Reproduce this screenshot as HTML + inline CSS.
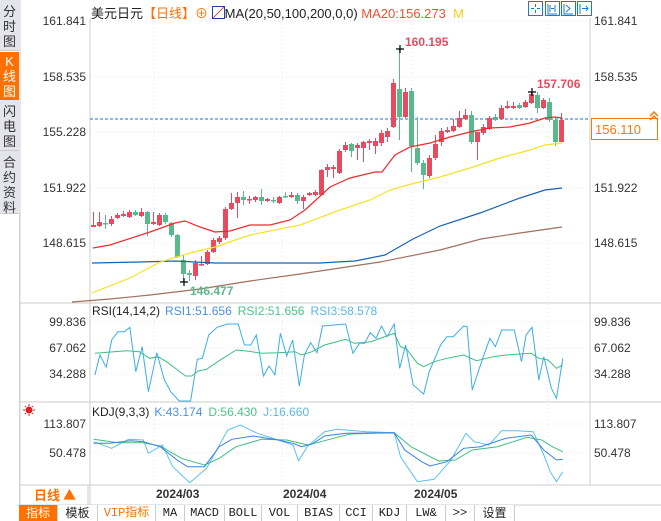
<!DOCTYPE html>
<html><head><meta charset="utf-8"><style>
body{margin:0;width:661px;height:521px;overflow:hidden;background:#fff;font-family:"Liberation Sans","Noto Sans CJK SC",sans-serif;position:relative}
.sb{position:absolute;left:0;width:19px;background:#e4e5ec;color:#333;font-size:13px;line-height:15px;text-align:center;border-bottom:1px solid #ccc}
.t{position:absolute;font-size:12px;white-space:nowrap}
.tb{position:absolute;top:505px;height:16px;border-right:1px solid #ccc;font-family:"Liberation Mono","Noto Sans CJK SC",monospace;font-size:12px;line-height:16px;text-align:center;background:#fff;color:#222}
</style></head><body>
<div class="sb" style="top:0;padding-top:4px;height:46px">分<br>时<br>图</div>
<div class="sb" style="top:52px;height:46px;padding-top:2px;background:#ff7000;color:#fff">K<br>线<br>图</div>
<div class="sb" style="top:100px;height:46px;padding-top:4px">闪<br>电<br>图</div>
<div class="sb" style="top:151px;height:58px;padding-top:4px">合<br>约<br>资<br>料</div>
<div style="position:absolute;left:0;top:213px;width:19px;height:292px;border-right:1px solid #ddd"></div>

<svg width="661" height="521" style="position:absolute;left:0;top:0" id="s" font-family="Liberation Sans, sans-serif">
<g stroke="#e6e6e6" stroke-dasharray="1,3">
<line x1="90" x2="590" y1="21" y2="21"/><line x1="90" x2="590" y1="77" y2="77"/><line x1="90" x2="590" y1="132" y2="132"/><line x1="90" x2="590" y1="188" y2="188"/><line x1="90" x2="590" y1="243" y2="243"/>
<line x1="90" x2="590" y1="322" y2="322"/><line x1="90" x2="590" y1="348" y2="348"/><line x1="90" x2="590" y1="374" y2="374"/>
<line x1="90" x2="590" y1="424" y2="424"/><line x1="90" x2="590" y1="453" y2="453"/>
<line x1="154" x2="154" y1="20" y2="485"/><line x1="282" x2="282" y1="20" y2="485"/><line x1="412" x2="412" y1="20" y2="485"/><line x1="548" x2="548" y1="20" y2="485"/>
</g>
<g stroke="#ccc"><line x1="90" x2="90" y1="18" y2="505"/><line x1="590" x2="590" y1="18" y2="485"/>
<line x1="20" x2="661" y1="303" y2="303"/><line x1="20" x2="661" y1="402" y2="402"/><line x1="20" x2="661" y1="485" y2="485"/><line x1="20" x2="661" y1="505" y2="505"/>
<line x1="20" x2="20" y1="0" y2="521"/><line x1="88" x2="88" y1="485" y2="505"/></g>
<g font-size="12" fill="#333" text-anchor="end">
<text x="86" y="25">161.841</text><text x="86" y="81">158.535</text><text x="86" y="136">155.228</text><text x="86" y="192">151.922</text><text x="86" y="247">148.615</text>
<text x="86" y="326">99.836</text><text x="86" y="352">67.062</text><text x="86" y="378">34.288</text>
<text x="86" y="428">113.807</text><text x="86" y="457">50.478</text></g>
<g font-size="12" fill="#333">
<text x="594" y="25">161.841</text><text x="594" y="81">158.535</text><text x="594" y="192">151.922</text><text x="594" y="247">148.615</text>
<text x="594" y="326">99.836</text><text x="594" y="352">67.062</text><text x="594" y="378">34.288</text>
<text x="594" y="428">113.807</text><text x="594" y="457">50.478</text></g>
<line x1="90" x2="590" y1="119" y2="119" stroke="#1a6fd0" stroke-dasharray="3,2"/>
<g id="c"></g>
<g fill="none" stroke-width="1.2">
<polyline stroke="#a07060" points="72,302 110,299 150,295 200,289 250,281 300,274 380,262 440,250 481,239 520,233 562,227"/>
<polyline stroke="#1a62b5" points="92,263 140,262 175,261 215,263 250,263 320,263 355,261 385,255 413,239 440,226 480,213 520,198 545,190 562,188"/>
<polyline stroke="#f5e225" points="92,293 130,278 160,262 190,253 215,247 250,235 300,225 340,210 370,200 390,190 415,183 440,177 470,168 500,158 530,150 545,145 562,143"/>
<polyline stroke="#ee2a2a" points="93,248 110,245 150,232 175,223 185,221 200,227 215,232 230,231 250,225 270,225 290,220 305,210 330,187 350,178 375,172 382,172 395,155 410,147 430,143 450,137 470,132 490,128 510,127 530,123 545,118 555,117 562,118"/>
</g>
<g stroke="#000" stroke-width="1.2"><path d="M396 49h8M400 45v8M528 92h8M532 88v8M180 282h8M184 278v8"/></g>
<text x="405" y="46" font-size="12" font-weight="bold" fill="#e84a5f">160.195</text>
<text x="537" y="88" font-size="12" font-weight="bold" fill="#e84a5f">157.706</text>
<text x="190" y="295" font-size="12" font-weight="bold" fill="#5ab98c">146.477</text>
<rect x="591.5" y="118.5" width="66" height="21" fill="#fff" stroke="#f07a10"/>
<text x="595" y="134" font-size="13" fill="#f07a10">156.110</text>
<path d="M650 116l4-4 4 4M650 120l4-4 4 4" stroke="#f07a10" fill="none" stroke-width="1.5"/>
<g fill="none" stroke-width="1" id="osc"></g>
<text x="92" y="315" font-size="12"><tspan fill="#222">RSI(14,14,2)</tspan><tspan fill="#4a8fe8" dx="5">RSI1:51.656</tspan><tspan fill="#4cc48a" dx="6">RSI2:51.656</tspan><tspan fill="#5cb8e8" dx="6">RSI3:58.578</tspan></text>
<text x="92" y="416" font-size="12"><tspan fill="#222">KDJ(9,3,3)</tspan><tspan fill="#4a8fe8" dx="5">K:43.174</tspan><tspan fill="#4cc48a" dx="6">D:56.430</tspan><tspan fill="#5cb8e8" dx="6">J:16.660</tspan></text>
<g stroke="#e02020" fill="none"><circle cx="29" cy="410" r="3" fill="#e02020"/><path d="M29 404v2M29 414v2M23 410h2M33 410h2M25 406l1 1M32 413l1 1M25 414l1-1M32 407l1-1"/></g>
<g font-size="12" font-weight="bold" fill="#333"><text x="156" y="498">2024/03</text><text x="283" y="498">2024/04</text><text x="414" y="498">2024/05</text></g>
<text x="34" y="500" font-size="13" font-weight="bold" fill="#ff7000" font-family="Noto Sans CJK SC, sans-serif">日线 ▲</text>
<g fill="#fff" stroke="#1a7ad0"><rect x="528.5" y="1.5" width="14" height="14"/><rect x="545.5" y="1.5" width="14" height="14"/><rect x="561.5" y="1.5" width="14" height="14"/><rect x="577.5" y="1.5" width="14" height="14"/></g>
<g stroke="#1a7ad0" fill="none"><path d="M535.5 4v3M535.5 10v3M531 8.5h3M537 8.5h3M548 4v10h9M550 5v7M555 5v7M551 8.5h3M564 4v10h9M566 5l4 3.5-4 3.5M580 4v10M582 8.5h6M586 6l2 2.5-2 2.5"/></g>
</svg>

<div class="t" style="left:91px;top:3px;font-size:13px;font-family:'Liberation Sans','Noto Sans CJK SC',sans-serif"><span style="color:#222">美元日元</span><span style="color:#ff7000">【日线】</span><span style="color:#ff7000">⊕</span> <span style="display:inline-block;width:11px;height:11px;border:1px solid #2040a0;vertical-align:-1px;background:linear-gradient(135deg,#fff 45%,#e02020 50%,#fff 55%)"></span><span style="color:#222">MA(20,50,100,200,0,0)</span> <span style="color:#f05030">MA20:156.273</span>&nbsp;&nbsp;<span style="color:#f0d020">M</span></div>

<div class="tb" style="left:19px;width:38px;background:#ff7000;color:#fff;font-family:'Noto Sans CJK SC',sans-serif">指标</div>
<div class="tb" style="left:58px;width:39px;font-family:'Noto Sans CJK SC',sans-serif">模板</div>
<div class="tb" style="left:98px;width:57px;color:#ff7000">VIP指标</div>
<div class="tb" style="left:156px;width:28px">MA</div>
<div class="tb" style="left:185px;width:39px">MACD</div>
<div class="tb" style="left:225px;width:36px">BOLL</div>
<div class="tb" style="left:262px;width:35px">VOL</div>
<div class="tb" style="left:298px;width:41px">BIAS</div>
<div class="tb" style="left:340px;width:32px">CCI</div>
<div class="tb" style="left:373px;width:33px">KDJ</div>
<div class="tb" style="left:407px;width:38px">LW&amp;</div>
<div class="tb" style="left:446px;width:28px">&gt;&gt;</div>
<div class="tb" style="left:475px;width:39px;font-family:'Noto Sans CJK SC',sans-serif">设置</div>

<script>
var d=[[227,225,212,227],[226,222,212,227],[223,224,215,229],[224,219,216,226],[218,215,213,219],[216,214,211,217],[217,212,210,218],[212,215,210,216],[216,212,208,217],[212,224,211,236],[224,222,212,225],[225,215,213,226],[215,222,213,224],[223,235,222,237],[235,257,234,258],[260,274,255,282],[273,275,270,281],[276,263,260,280],[265,264,256,266],[264,252,250,265],[252,240,238,253],[242,238,236,244],[238,209,207,240],[209,203,193,210],[203,197,192,218],[197,200,191,205],[200,199,196,204],[200,197,196,202],[197,201,189,205],[201,199,198,202],[200,201,197,203],[203,197,196,204],[196,197,192,198],[197,195,192,198],[195,201,193,204],[201,197,195,209],[195,193,192,196],[195,192,190,196],[195,170,169,195],[170,167,164,177],[169,167,165,178],[173,151,149,174],[150,145,142,152],[144,151,143,157],[148,145,143,160],[148,142,141,162],[143,141,139,150],[146,141,138,154],[143,133,130,146],[137,131,128,142],[127,83,79,128],[89,117,49,140],[117,92,88,118],[91,146,88,172],[148,163,117,165],[163,175,160,189],[176,158,155,178],[158,144,135,160],[142,131,128,146],[132,130,127,133],[131,126,119,132],[127,118,111,128],[119,115,109,120],[115,142,111,144],[142,132,132,160],[133,127,124,135],[129,118,116,130],[117,120,114,121],[119,108,105,120],[108,106,101,109],[108,106,102,109],[105,108,103,109],[107,102,100,108],[103,94,92,104],[95,108,92,113],[108,100,98,109],[102,120,98,122],[120,142,118,146],[142,120,113,142]];
var g='';for(var i=0;i<d.length;i++){var x=93+i*6,o=d[i][0],c=d[i][1],up=c<=o,col=up?'#e84a5f':'#5ab98c',t=Math.min(o,c),h=Math.max(Math.abs(o-c),1.5);
g+='<line x1="'+(x+.5)+'" x2="'+(x+.5)+'" y1="'+d[i][2]+'" y2="'+d[i][3]+'" stroke="'+col+'"/><rect x="'+(x-2)+'" y="'+t+'" width="5" height="'+h+'" fill="'+col+'"/>';}
document.getElementById('c').innerHTML=g;
function P(a,oy,col){var s='';for(var i=0;i<a.length;i+=2)s+=(a[i]/2.372).toFixed(1)+','+(oy+a[i+1]/3).toFixed(1)+' ';return '<polyline stroke="'+col+'" points="'+s+'"/>';}
var r1=[225,255,237,195,252,232,265,150,280,125,295,125,308,112,322,245,337,170,352,305,372,188,390,270,405,305,425,333,452,333,468,208,480,205,495,135,515,112,540,102,565,102,580,165,595,165,608,135,625,258,638,228,652,255,665,130,680,198,694,150,710,288,722,195,737,158,752,188,765,108,820,102,837,190,853,160,865,160,878,128,892,145,905,108,918,140,935,102,948,235,962,165,980,285,1005,312,1018,245,1045,165,1060,140,1075,140,1100,108,1108,110,1120,300,1145,205,1162,145,1175,170,1190,120,1220,120,1237,215,1248,135,1262,112,1278,270,1290,200,1308,295,1320,325,1335,205];
var r2=[225,190,300,182,330,185,355,205,375,200,395,215,440,258,455,258,470,243,490,238,520,212,560,180,590,184,620,190,660,188,700,185,715,195,740,185,770,165,820,148,840,160,880,155,935,130,950,170,965,178,990,220,1005,230,1030,215,1060,205,1100,195,1130,212,1170,200,1200,195,1260,190,1278,205,1300,210,1320,235,1335,225];
var kj=[222,125,265,145,305,118,340,120,352,160,365,150,385,135,410,200,450,248,490,205,540,90,570,75,610,100,660,120,695,135,708,182,730,138,770,95,800,88,870,95,935,98,950,170,990,245,1030,238,1070,180,1105,100,1125,125,1160,135,1190,92,1225,92,1265,95,1290,165,1305,215,1320,245,1335,215];
var kk=[222,130,260,130,310,122,340,125,380,140,420,180,445,200,485,200,520,140,550,118,600,108,660,120,695,130,715,140,740,132,770,108,820,100,935,98,960,150,1000,185,1020,198,1060,185,1100,145,1140,140,1200,115,1260,105,1290,150,1320,180,1335,178];
var kd=[222,118,280,128,340,128,380,138,430,175,485,195,520,175,560,140,620,118,680,120,730,135,770,122,830,102,935,98,975,140,1040,183,1080,180,1120,150,1180,140,1250,112,1285,120,1310,140,1335,155];
document.getElementById('osc').innerHTML=P(r2,290,'#3cbf80')+P(r1,290,'#3aaee6')+P(kj,400,'#5cc0f0')+P(kd,400,'#3cbf80')+P(kk,400,'#3a80e8');
</script>
</body></html>
